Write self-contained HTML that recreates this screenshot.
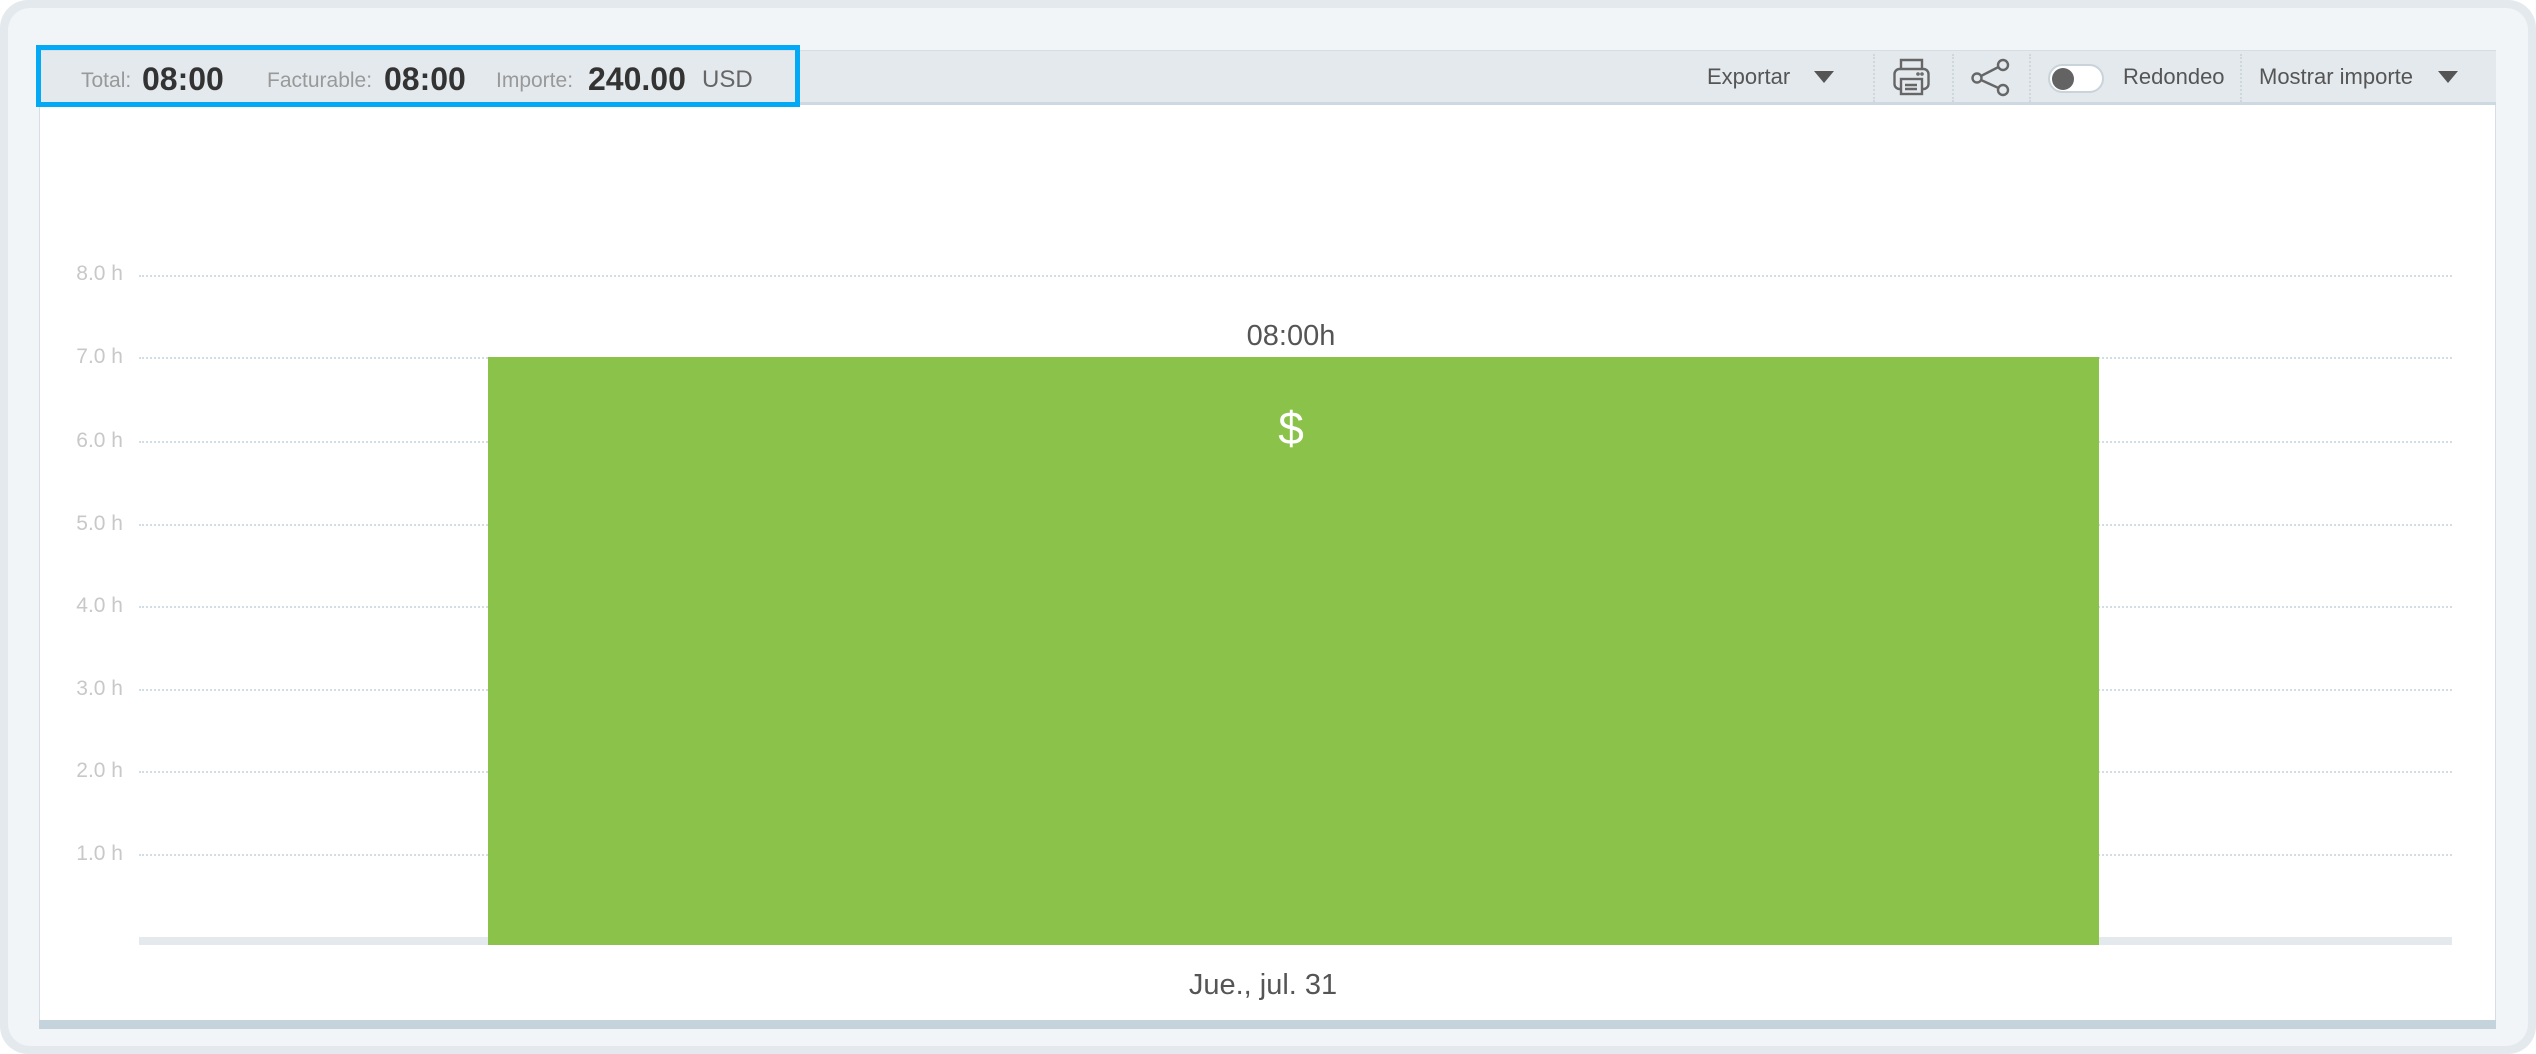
<!DOCTYPE html>
<html><head><meta charset="utf-8"><style>
*{margin:0;padding:0;box-sizing:border-box}
body{width:2536px;height:1054px;background:#fff;font-family:"Liberation Sans",sans-serif;position:relative;overflow:hidden}
.outer{position:absolute;left:0;top:0;width:2536px;height:1054px;border-radius:28px;background:#e4e9ed}
.inner{position:absolute;left:8px;top:8px;right:8px;bottom:8px;border-radius:22px;background:#f1f5f8}
.panel{position:absolute;left:39px;top:50px;width:2457px;height:979px;background:#fff;border:1px solid #d5dee5;border-bottom:none}
.hdr{position:absolute;left:39px;top:50px;width:2457px;height:55px;background:#e4e9ed;border-bottom:3px solid #cdd9e1;border-top:1px solid #d5dee5}
.strip{position:absolute;left:39px;top:1020px;width:2457px;height:9px;background:#c5d3dc}
.box{position:absolute;left:36px;top:45px;width:764px;height:62px;border:5px solid #03a9f4}
.t{position:absolute;white-space:nowrap;line-height:1}
.lbl{font-size:21px;color:#999}
.val{font-size:32px;color:#333;font-weight:bold}
.r{font-size:22px;color:#555}
.sep{position:absolute;top:54px;height:48px;border-left:2px dotted #cfd6dc}
.grid{position:absolute;left:139px;width:2313px;border-top:2px dotted #d3dde4}
.yl{position:absolute;width:123px;text-align:right;font-size:21px;color:#c8c8c8;line-height:1}
</style></head><body>
<div class="outer"></div><div class="inner"></div>
<div class="panel"></div>
<div class="hdr"></div>
<div class="strip"></div>
<div class="box"></div>
<div class="t lbl" style="left:81px;top:70px">Total:</div>
<div class="t val" style="left:142px;top:63px">08:00</div>
<div class="t lbl" style="left:267px;top:70px">Facturable:</div>
<div class="t val" style="left:384px;top:63px">08:00</div>
<div class="t lbl" style="left:496px;top:70px">Importe:</div>
<div class="t val" style="left:588px;top:63px">240.00</div>
<div class="t" style="left:702px;top:68px;font-size:24px;color:#666">USD</div>

<div class="t r" style="left:1707px;top:66px">Exportar</div>
<svg style="position:absolute;left:1814px;top:71px" width="20" height="12"><path d="M0 0H20L10 12Z" fill="#555"/></svg>
<div class="sep" style="left:1873px"></div>
<svg style="position:absolute;left:1893px;top:58px" width="38" height="38" viewBox="0 0 38 38" fill="none" stroke="#666" stroke-width="2.4">
<path d="M8 11V2H29V11"/><rect x="1.5" y="11" width="34" height="20" rx="5"/><rect x="8" y="21" width="21" height="15" fill="#e4e9ed"/><path d="M12 27H24M12 31H24"/><circle cx="25" cy="16" r="0.6" fill="#666"/><circle cx="29" cy="16" r="0.6" fill="#666"/></svg>
<div class="sep" style="left:1952px"></div>
<svg style="position:absolute;left:1971px;top:58px" width="40" height="40" viewBox="0 0 40 40" fill="none" stroke="#666" stroke-width="2.4">
<circle cx="6" cy="20" r="4.5"/><circle cx="32" cy="7" r="5"/><circle cx="32" cy="32" r="5"/><path d="M10 18L27.5 9M10 22L27.5 30"/></svg>
<div class="sep" style="left:2029px"></div>
<div style="position:absolute;left:2048px;top:64px;width:56px;height:29px;border-radius:15px;background:#fff;border:2px solid #c8d3da"></div>
<div style="position:absolute;left:2052px;top:68px;width:22px;height:22px;border-radius:50%;background:#636363"></div>
<div class="t r" style="left:2123px;top:66px">Redondeo</div>
<div class="sep" style="left:2240px"></div>
<div class="t r" style="left:2259px;top:66px">Mostrar importe</div>
<svg style="position:absolute;left:2438px;top:71px" width="20" height="12"><path d="M0 0H20L10 12Z" fill="#555"/></svg>

<div class="grid" style="top:275px"></div><div class="yl" style="left:0;top:263px">8.0 h</div>
<div class="grid" style="top:357px"></div><div class="yl" style="left:0;top:346px">7.0 h</div>
<div class="grid" style="top:441px"></div><div class="yl" style="left:0;top:430px">6.0 h</div>
<div class="grid" style="top:524px"></div><div class="yl" style="left:0;top:513px">5.0 h</div>
<div class="grid" style="top:606px"></div><div class="yl" style="left:0;top:595px">4.0 h</div>
<div class="grid" style="top:689px"></div><div class="yl" style="left:0;top:678px">3.0 h</div>
<div class="grid" style="top:771px"></div><div class="yl" style="left:0;top:760px">2.0 h</div>
<div class="grid" style="top:854px"></div><div class="yl" style="left:0;top:843px">1.0 h</div>
<div style="position:absolute;left:139px;top:937px;width:2313px;height:8px;background:#e4e9ed"></div>
<div style="position:absolute;left:488px;top:357px;width:1611px;height:588px;background:#8bc34a"></div>
<div class="t" style="left:1191px;width:200px;text-align:center;top:322px;font-size:29px;color:#555">08:00h</div>
<div class="t" style="left:1241px;width:100px;text-align:center;top:405px;font-size:46px;color:#fff">$</div>
<div class="t" style="left:1063px;width:400px;text-align:center;top:971px;font-size:29px;color:#555">Jue., jul. 31</div>
</body></html>
